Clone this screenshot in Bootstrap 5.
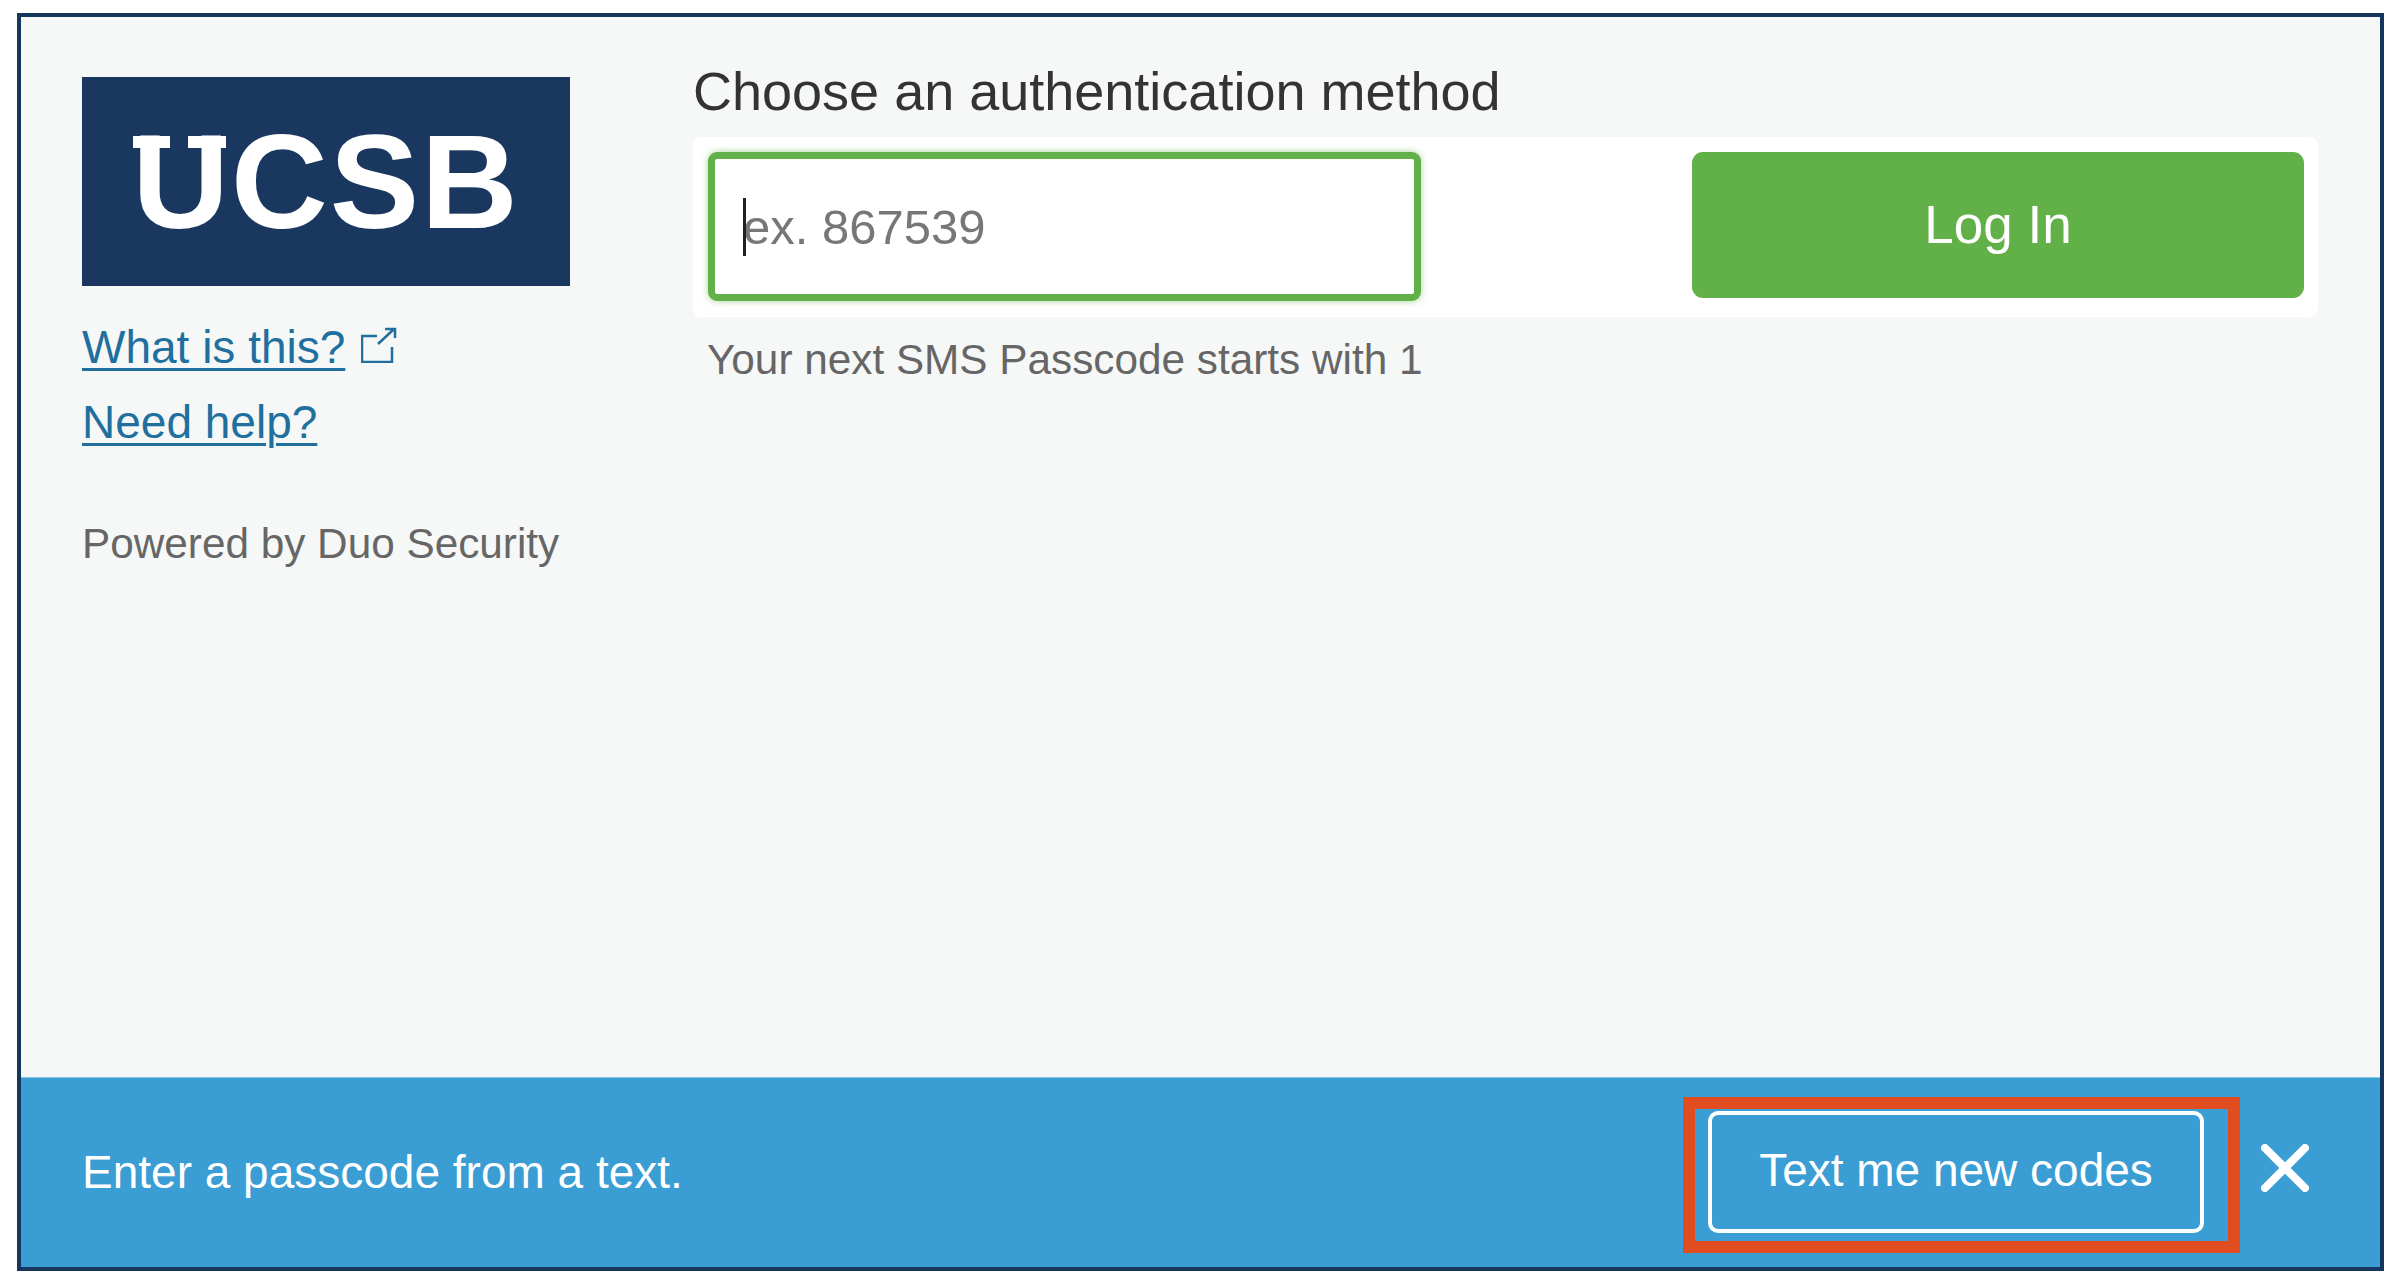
<!DOCTYPE html>
<html lang="en">
<head>
  <meta charset="UTF-8" />
  <title>Duo Security</title>
  <link href="https://cdn.jsdelivr.net/npm/bootstrap@5.3.2/dist/css/bootstrap.min.css" rel="stylesheet">
  <style>
    body {
      font-family: "Liberation Sans", Arial, sans-serif;
      background: #fff;
      padding: 13px 16px 15px 17px;
    }

    .duo-frame {
      height: 1258px;
      border: 4px solid #15375e;
      background: #f6f8f7;
    }

    .duo-main {
      padding: 44px 62px 0 61px;
    }

    .duo-side {
      width: 488px;
      margin: 16px 123px 0 0;
      font-size: 46px;
    }

    .duo-logo {
      height: 209px;
      background: #19375f;
      color: #fff;
      font-weight: 700;
      font-size: 134px;
      line-height: 1;
      letter-spacing: 2px;
    }

    .duo-u {
      position: relative;
    }

    .duo-u::before,
    .duo-u::after {
      content: "";
      position: absolute;
      top: 29px;
      height: 12px;
      background: #fff;
    }

    .duo-u::before {
      left: 1px;
      width: 37px;
    }

    .duo-u::after {
      left: 56px;
      width: 38px;
    }

    .duo-side a {
      color: #1f6f9f;
      text-decoration-thickness: 3px;
      text-underline-offset: 5px;
    }

    .duo-links {
      margin-top: 37px;
      line-height: 48px;
    }

    .duo-links p {
      margin-bottom: 27px;
    }

    .duo-links svg {
      margin-left: 3px;
    }

    .duo-powered {
      color: #666;
      margin-top: 74px;
      font-size: 42.3px;
      line-height: 48px;
    }

    .duo-title {
      color: #333;
      font-size: 54px;
      line-height: 60px;
      margin-bottom: 16px;
      font-weight: 400;
    }

    .duo-panel {
      background: #fff;
      height: 180px;
      border-radius: 8px;
      padding: 15px 14px 19px 15px;
    }

    .duo-input-wrap {
      position: relative;
      width: 713px;
    }

    .duo-input.form-control {
      height: 149px;
      border: 7px solid #62b148;
      border-radius: 9px;
      box-shadow: 0 0 7px rgba(98, 177, 72, .55);
      font-size: 49px;
      padding: 0 0 0 28px;
      color: #333;
    }

    .duo-input::placeholder {
      color: #777;
    }

    .duo-caret {
      position: absolute;
      left: 35px;
      top: 46px;
      width: 3px;
      height: 58px;
      background: #222;
    }

    .duo-login.btn {
      width: 612px;
      height: 146px;
      background: #62b148;
      border: 0;
      border-radius: 11px;
      color: #fff;
      font-size: 53px;
    }

    .duo-hint {
      color: #666;
      font-size: 42.3px;
      line-height: 48px;
      margin: 19px 0 0 14px;
    }

    .duo-bar {
      height: 190px;
      background: #3a9dd4;
      border-top: 1px solid #8cc6e6;
      color: #fff;
      padding: 0 71px 0 61px;
      font-size: 46px;
    }

    .duo-mark {
      border: 12px solid #e24d20;
      padding: 2px 24px 8px 13px;
      margin-top: 5px;
    }

    .duo-codes.btn {
      width: 496px;
      height: 122px;
      border: 4px solid #fff;
      border-radius: 10px;
      color: #fff;
      font-size: 46px;
      padding: 0 0 4px;
      background: transparent;
    }

    .duo-close {
      margin: 0 0 9px 21px;
    }
  </style>
</head>
<body>
  <div class="duo-frame d-flex flex-column">
    <div class="duo-main d-flex flex-grow-1">
      <div class="duo-side flex-shrink-0">
        <div class="duo-logo d-flex align-items-center justify-content-center"><span><span class="duo-u">U</span>CSB</span></div>
        <div class="duo-links">
          <p>
            <a href="#">What is this?</a>
            <svg class="align-baseline" width="36" height="36" viewBox="0 0 36 36" fill="none" stroke="#1f6f9f" stroke-width="2.5">
              <path d="M16 9H1v26h30V20" />
              <path d="M17 17L32 3M24 2h10v9" />
            </svg>
          </p>
          <p><a href="#">Need help?</a></p>
        </div>
        <div class="duo-powered">Powered by Duo Security</div>
      </div>
      <div class="flex-grow-1">
        <h1 class="duo-title">Choose an authentication method</h1>
        <div class="duo-panel d-flex justify-content-between align-items-start">
          <div class="duo-input-wrap">
            <input type="text" class="form-control duo-input" placeholder="ex. 867539">
            <span class="duo-caret"></span>
          </div>
          <button type="button" class="btn duo-login">Log In</button>
        </div>
        <p class="duo-hint">Your next SMS Passcode starts with 1</p>
      </div>
    </div>
    <div class="duo-bar d-flex align-items-center justify-content-between">
      <span>Enter a passcode from a text.</span>
      <div class="d-flex align-items-center">
        <div class="duo-mark">
          <button type="button" class="btn duo-codes">Text me new codes</button>
        </div>
        <svg class="duo-close" width="48" height="48" viewBox="0 0 48 48" stroke="#fff" stroke-width="8" stroke-linecap="round">
          <path d="M4 4L44 44M44 4L4 44" />
        </svg>
      </div>
    </div>
  </div>
  <script src="https://cdn.jsdelivr.net/npm/bootstrap@5.3.2/dist/js/bootstrap.bundle.min.js"></script>
</body>
</html>
